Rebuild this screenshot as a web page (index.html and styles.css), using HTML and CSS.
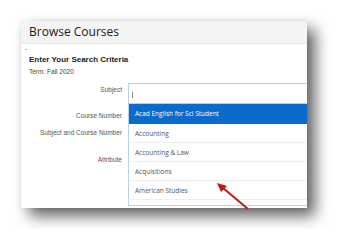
FILE: index.html
```html
<!DOCTYPE html>
<html lang="en">
<head>
  <meta charset="UTF-8">
  <meta name="viewport" content="width=device-width, initial-scale=1.0">
  <title>Browse Courses</title>
  <link rel="stylesheet" href="styles.css">
</head>
<body>
  <div class="card">
    <div class="card-header">
      <h1>Browse Courses</h1>
    </div>
    <div class="card-body">
      <span class="dot"></span>
      <h2>Enter Your Search Criteria</h2>
      <p class="term">Term: Fall 2020</p>

      <div class="search-form">
        <div class="labels">
          <label>Subject</label>
          <label>Course Number</label>
          <label>Subject and Course Number</label>
          <label>Attribute</label>
        </div>
        <div class="combo">
          <div class="combo-input"><span class="caret"></span></div>
          <ul class="combo-list">
            <li class="selected">Acad English for Sci Student</li>
            <li>Accounting</li>
            <li>Accounting &amp; Law</li>
            <li>Acquisitions</li>
            <li>American Studies</li>
          </ul>
        </div>
      </div>
    </div>
  </div>

  <svg class="arrow" width="349" height="251" viewBox="0 0 349 251">
    <line x1="248" y1="209" x2="223" y2="188" stroke="#c4161c" stroke-width="2"/>
    <polygon points="217,183 227,186 221,192" fill="#c4161c"/>
  </svg>
</body>
</html>
```

FILE: styles.css
```css
* {
  margin: 0;
  padding: 0;
  box-sizing: border-box;
}

body {
  background: #ffffff;
  padding: 21px;
  font-family: 'Open Sans', sans-serif;
  color: #444;
}

.card {
  width: 286px;
  height: 187px;
  background: #ffffff;
  overflow: hidden;
  box-shadow: 8px 8px 14px rgba(0, 0, 0, 0.62), 0 0 4px rgba(0, 0, 0, 0.08);
}

.card-header {
  height: 23px;
  background: #f4f4f4;
  border-bottom: 1px solid #e8e8e8;
  padding-left: 8px;
}

.card-header h1 {
  font-size: 12px;
  font-weight: 500;
  line-height: 22px;
  color: #1a1a1a;
}

.card-body {
  padding-left: 8px;
}

.dot {
  display: block;
  width: 2px;
  height: 1px;
  margin: 5px 0 0 -4px;
  background: #aaa;
}

.card-body h2 {
  font-family: 'Liberation Sans', sans-serif;
  font-size: 8px;
  font-weight: 700;
  line-height: 10px;
  margin-top: 5px;
  color: #222;
}

.term {
  font-family: 'Liberation Sans', sans-serif;
  font-size: 6.5px;
  line-height: 9px;
  margin-top: 2px;
  color: #444;
}

.search-form {
  display: flex;
  gap: 6px;
  margin-top: 7px;
}

.labels {
  width: 93px;
  display: grid;
  grid-template-rows: 26px 17px 27px auto;
  padding-top: 2px;
  text-align: right;
}

.labels label {
  font-family: 'Liberation Sans', sans-serif;
  font-size: 6.5px;
  line-height: 10px;
  color: #555;
}

.combo {
  flex: 1;
  border-top: 1px solid #b9d2ee;
  border-left: 1px solid #b9d2ee;
  border-bottom: 1px solid #b9d2ee;
}

.combo-input {
  height: 20px;
  border-bottom: 1px solid #b9d2ee;
  padding: 8px 0 0 3px;
}

.caret {
  display: block;
  width: 1px;
  height: 6px;
  background: #888;
}

.combo-list {
  list-style: none;
  padding-bottom: 5px;
}

.combo-list li {
  height: 19px;
  line-height: 19px;
  padding-left: 6px;
  font-size: 6.5px;
  color: #555;
  border-bottom: 1px solid #eeeeee;
}

.combo-list li.selected {
  height: 20px;
  line-height: 20px;
  background: #0b6bcb;
  color: #ffffff;
  border-bottom: none;
}

.arrow {
  position: absolute;
  left: 0;
  top: 0;
  pointer-events: none;
}
```
